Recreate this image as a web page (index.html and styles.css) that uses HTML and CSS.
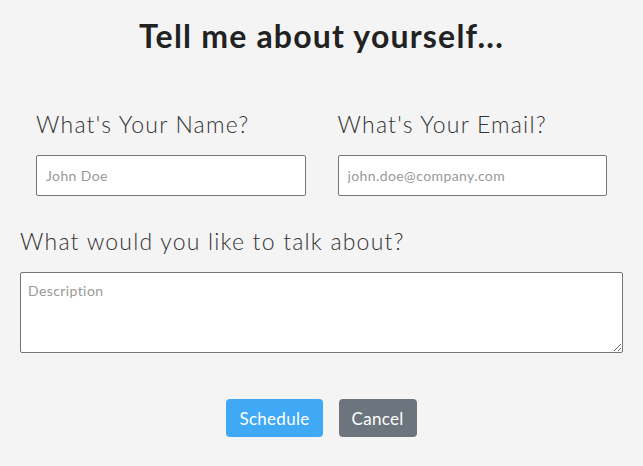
FILE: index.html
```html
<!DOCTYPE html>
<html lang="en">
<head>
    <meta charset="UTF-8">
    <meta name="viewport" content="width=device-width, initial-scale=1.0">
    <title>Tell me about yourself</title>
    <link rel="stylesheet" href="styles.css">
</head>
<body>
    <div class="contact">
        <h1>Tell me about yourself...</h1>
        <form class="contact-form">
            <div class="row">
                <div class="col">
                    <label for="name">What's Your Name?</label>
                    <input type="text" id="name" name="name" placeholder="John Doe">
                </div>
                <div class="col">
                    <label for="email">What's Your Email?</label>
                    <input type="email" id="email" name="email" placeholder="john.doe@company.com">
                </div>
            </div>

            <label for="topic">What would you like to talk about?</label>
            <textarea id="topic" name="topic" placeholder="Description"></textarea>

            <div class="actions">
                <button type="submit" class="btn btn-primary">Schedule</button>
                <button type="button" class="btn btn-secondary">Cancel</button>
            </div>
        </form>
    </div>
</body>
</html>
```

FILE: styles.css
```css
body {
    margin: 0;
    font-family: Lato, "Open Sans", sans-serif;
    background-color: #f4f4f4;
    color: #333;
}

.contact {
    padding: 0 20px;
}

.contact h1 {
    margin: 0;
    padding-top: 16px;
    text-align: center;
    font-size: 32px;
    font-weight: bold;
    letter-spacing: 1.2px;
    color: #222;
}

.row {
    display: flex;
    margin-top: 55px;
}

.col {
    flex: 1;
    padding: 0 16px;
}

.contact-form label {
    display: block;
    font-size: 23px;
    font-weight: 300;
    letter-spacing: 1.2px;
    color: #333;
    margin-bottom: 17px;
}

.contact-form input,
.contact-form textarea {
    display: block;
    box-sizing: border-box;
    width: 100%;
    border: 1px solid #767676;
    border-radius: 2px;
    background-color: #fff;
    font-family: inherit;
    font-size: 14px;
    letter-spacing: 0.4px;
    padding: 9px;
}

.contact-form input {
    height: 41px;
}

.contact-form textarea {
    height: 81px;
    padding: 9px 7px;
    resize: vertical;
}

.contact-form ::placeholder {
    color: #999;
}

.row + label {
    margin-top: 31px;
}

.actions {
    display: flex;
    justify-content: center;
    gap: 16px;
    margin-top: 46px;
}

.btn {
    height: 38px;
    padding: 0 13px;
    border: none;
    border-radius: 4px;
    color: #fff;
    font-family: inherit;
    font-size: 17px;
    letter-spacing: 0.3px;
    cursor: pointer;
}

.btn-primary {
    background-color: #3fa9f5;
}

.btn-secondary {
    background-color: #6c757d;
}
```
